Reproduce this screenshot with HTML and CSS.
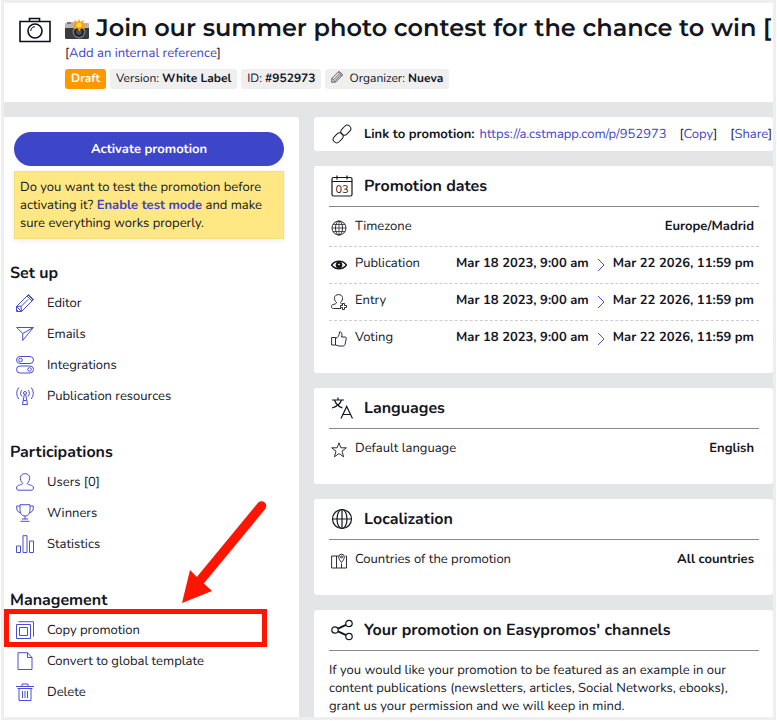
FILE: index.html
```html
<!DOCTYPE html>
<html lang="en">
<head>
    <meta charset="UTF-8">
    <meta name="viewport" content="width=device-width, initial-scale=1.0">
    <title>Promotion overview</title>
    <link rel="stylesheet" href="styles.css">
</head>
<body>
    <div class="page">
        <header class="header">
            <svg class="header-icon" viewBox="0 0 32 26" fill="none" stroke="#0c0f1a" stroke-width="1.6">
                <path d="M1 4.500h30v20H1zM10.500 4V1.500h10V4"/>
                <circle cx="16" cy="14" r="7"/>
                <path d="M11.800 14a4.200 4.200 0 0 1 4.200-4.200" stroke-width="1.1"/>
            </svg>
            <div class="header-text">
                <h1>
                    <svg class="emoji" viewBox="0 0 24 20">
                        <rect x="0" y="5" width="24" height="15" rx="1.500" fill="#3b3b3d"/>
                        <path d="M1 4h5V3h12v1h5a1 1 0 0 1 1 1v4H0V5a1 1 0 0 1 1-1z" fill="#b5b5b6"/>
                        <rect x="2" y="3" width="4" height="2" fill="#777"/>
                        <circle cx="14" cy="13" r="6.500" fill="#77787a"/>
                        <circle cx="14" cy="13" r="5" fill="#1f2126"/>
                        <circle cx="14" cy="13" r="3" fill="#4b5058"/>
                        <path d="M14 0l1.300 3L19 1l-1.200 3.500 3.700 1-3.500 1.700L20 10.500l-4-1.300-1.500 3.300-2-3.300-4 1.300 1.700-3.300L7 6l3.300-1.500L9 1l3.700 2z" fill="#ff9d0a"/>
                        <circle cx="14" cy="6" r="2.600" fill="#ffdc4a"/>
                    </svg>
                    Join our summer photo contest for the chance to win [E
                </h1>
                <p class="reference">[<a href="#">Add an internal reference</a>]</p>
                <div class="badges">
                    <span class="badge draft">Draft</span>
                    <span class="badge">Version: <b>White Label</b></span>
                    <span class="badge">ID: <b>#952973</b></span>
                    <span class="badge">
                        <svg class="badge-icon" viewBox="0 0 18 18" fill="none" stroke="#333" stroke-width="1.2" stroke-linejoin="round">
                            <path d="M1 17l.5-6L11 1.500 12.500 .8l4.700 4.700-.7 1.500L7 16.500zM1.500 11L7 16.500M11 1.500L16.500 7M4.500 12.500l8-8M6.500 14l8-8"/>
                        </svg>
                        Organizer: <b>Nueva</b>
                    </span>
                </div>
            </div>
        </header>

        <div class="content">
            <aside class="sidebar">
                <button class="activate" type="button">Activate promotion</button>
                <p class="notice">Do you want to test the promotion before activating it? <a href="#">Enable test mode</a> and make sure everything works properly.</p>

                <nav>
                    <h2>Set up</h2>
                    <ul>
                        <li><a href="#">
                            <svg viewBox="0 0 18 18"><path d="M.5 17.500v-5L11 2l1.500-1.500 5 5L16 7 5.500 17.500zM.5 12.500l5 5M11 2l5 5M12 1l5 5M5 12.500l7-7M.5 12.500l4.500-.5.5 5.500M.5 15.500l2 2"/></svg>
                            Editor</a></li>
                        <li><a href="#">
                            <svg viewBox="0 0 18 18"><path d="M.7 2.500h16.600L6.700 15.500V8.500zM6.700 8.500L17.300 2.500"/></svg>
                            Emails</a></li>
                        <li><a href="#">
                            <svg viewBox="0 0 18 18"><rect x=".5" y=".5" width="17" height="7" rx="3.500"/><circle cx="4.500" cy="4" r="1.800"/><rect x=".5" y="10" width="17" height="7" rx="3.500"/><circle cx="13.500" cy="13.500" r="1.800"/></svg>
                            Integrations</a></li>
                        <li><a href="#">
                            <svg viewBox="0 0 18 18"><circle cx="9" cy="6" r="1.500"/><path d="M8.300 7.500L6.500 17.500h5L9.700 7.500M7.300 13.500h3.400M6 9.500a4.500 4.500 0 0 1 0-6.500M12 9.500a4.500 4.500 0 0 0 0-6.500M2.800 12a9 9 0 0 1 0-11.500M15.200 12a9 9 0 0 0 0-11.500"/></svg>
                            Publication resources</a></li>
                    </ul>
                    <h2>Participations</h2>
                    <ul>
                        <li><a href="#">
                            <svg viewBox="0 0 18 18"><path d="M6.700 10.300C3 7 3.500.7 9 .7s6 6.300 2.300 9.600c0 2 6.200 1 6.200 4.700 0 1.500-.8 2.200-2.500 2.200H3C1.300 17.200.5 16.500.5 15c0-3.700 6.200-2.700 6.200-4.700z"/></svg>
                            Users [0]</a></li>
                        <li><a href="#">
                            <svg viewBox="0 0 18 18"><path d="M4 .7h10v5c0 4-2 6.300-5 6.300S4 9.700 4 5.700zM4 2H.7v2c0 3 1.800 4.500 4.300 4.800M14 2h3.300v2c0 3-1.800 4.500-4.300 4.800M9 12v3M6 15h6M4.500 17.300h9"/></svg>
                            Winners</a></li>
                        <li><a href="#">
                            <svg viewBox="0 0 18 18"><path d="M.5 11h4v6.500h-4zM7 .7h4v16.800H7zM13.500 6h4v11.500h-4z"/></svg>
                            Statistics</a></li>
                    </ul>
                    <h2>Management</h2>
                    <ul>
                        <li class="highlighted"><a href="#">
                            <svg viewBox="0 0 18 18"><path d="M.5 3.500h14v14H.5zM3.500 6.500h8v8h-8zM2.500 .7h15v15"/></svg>
                            Copy promotion</a>
                            <!-- pointer to the highlighted entry -->
                            <svg class="arrow" viewBox="0 0 86 104">
                                <path d="M80.500 6L17 83" stroke="#ff1500" stroke-width="9.500" stroke-linecap="round"/>
                                <path d="M1 103L9 70l10 10 12 11z" fill="#ff1500" stroke="none"/>
                            </svg>
                        </li>
                        <li><a href="#">
                            <svg viewBox="0 0 18 18"><path d="M2 .7h9.500L16 5.500v12H2zM11.500.7v4.800H16"/></svg>
                            Convert to global template</a></li>
                        <li><a href="#">
                            <svg viewBox="0 0 18 18"><path d="M0 3.500h18M1.500 5.500h15M6 3.500V1h6v2.500M3 5.500v12h12v-12M6.500 8v7M9 8v7M11.500 8v7"/></svg>
                            Delete</a></li>
                    </ul>
                </nav>
            </aside>

            <main class="main">
                <section class="card link-card">
                    <svg class="title-icon" viewBox="0 0 22 22">
                        <rect x="-5" y="-3.500" width="11" height="7" rx="3.500" transform="translate(14.500 7.500) rotate(-45)"/>
                        <rect x="-6" y="-3.500" width="11" height="7" rx="3.500" transform="translate(7.500 14.500) rotate(-45)"/>
                    </svg>
                    <b>Link to promotion:</b>
                    <a href="#">https://a.cstmapp.com/p/952973</a>
                    <span class="link-action">[<a href="#">Copy</a>]</span>
                    <span class="link-action">[<a href="#">Share</a>]</span>
                </section>

                <section class="card">
                    <h3>
                        <svg class="title-icon" viewBox="0 0 22 22"><rect x="1" y="2.500" width="20" height="18.500" rx="1.500"/><path d="M1 6.500h20M6 .5v4M16 .5v4"/><text x="11" y="17.500" text-anchor="middle">03</text></svg>
                        Promotion dates
                    </h3>
                    <dl>
                        <div class="row">
                            <dt><svg viewBox="0 0 16 16"><circle cx="8" cy="8" r="7"/><ellipse cx="8" cy="8" rx="3.500" ry="7"/><path d="M8 1v14M1 8h14M2 4.500h12M2 11.500h12" stroke-width=".7"/></svg>Timezone</dt>
                            <dd>Europe/Madrid</dd>
                        </div>
                        <div class="row">
                            <dt><svg viewBox="0 0 16 16"><path d="M.5 8C4 3 12 3 15.500 8 12 13 4 13 .5 8z" stroke-width="1.5"/><circle cx="8" cy="8" r="3" fill="#111"/><circle cx="8" cy="7.500" r=".6" stroke="#fff"/></svg>Publication</dt>
                            <dd>Mar 18 2023, 9:00 am <svg class="chevron" viewBox="0 0 8 14"><path d="M1 1l6 6-6 6"/></svg> Mar 22 2026, 11:59 pm</dd>
                        </div>
                        <div class="row">
                            <dt><svg viewBox="0 0 16 16"><path d="M10 14.500H2.500C-.5 14.500 0 11 2 10.500c2.500-.6 3.500-.8 3.500-2C2 5.500 3 .6 7.500.6s5.500 4.900 2 7.900c0 .8.5 1.200 1.500 1.500"/><path d="M11.500 9.500h2v2h2v2h-2v2h-2v-2h-2v-2h2z"/></svg>Entry</dt>
                            <dd>Mar 18 2023, 9:00 am <svg class="chevron" viewBox="0 0 8 14"><path d="M1 1l6 6-6 6"/></svg> Mar 22 2026, 11:59 pm</dd>
                        </div>
                        <div class="row">
                            <dt><svg viewBox="0 0 16 16"><path d="M.6 6.500h3.900v7.500H.6zM4.500 7.500C7 6.500 8.500 4.500 8.500 1c2.500-.5 3 2.500 2 5h3.500c1.500 0 1.500 1 1 3l-1 4.500c-.3 1-1 1.500-2 1.500H8c-1.500 0-2-1-3.500-1"/></svg>Voting</dt>
                            <dd>Mar 18 2023, 9:00 am <svg class="chevron" viewBox="0 0 8 14"><path d="M1 1l6 6-6 6"/></svg> Mar 22 2026, 11:59 pm</dd>
                        </div>
                    </dl>
                </section>

                <section class="card">
                    <h3>
                        <svg class="title-icon" viewBox="0 0 22 22"><path d="M1 3h12M7 .5V3M3.500 3c1 3.500 4 6.500 8 8M10.500 3c-1 3.500-4 6.500-9.500 8M10 21.500L15.700 9.500 21.500 21.500M12 17.500h7.500"/></svg>
                        Languages
                    </h3>
                    <dl>
                        <div class="row">
                            <dt><svg viewBox="0 0 16 16"><path d="M8 .8l1.900 5h5.400L11 9.200l1.600 5.600L8 11.500l-4.600 3.300L5 9.200.7 5.800h5.400z"/></svg>Default language</dt>
                            <dd>English</dd>
                        </div>
                    </dl>
                </section>

                <section class="card">
                    <h3>
                        <svg class="title-icon" viewBox="0 0 22 22"><circle cx="11" cy="11" r="9.500"/><ellipse cx="11" cy="11" rx="5" ry="9.500"/><path d="M11 1.500v19M1.500 11h19"/></svg>
                        Localization
                    </h3>
                    <dl>
                        <div class="row">
                            <dt><svg viewBox="0 0 16 16"><path d="M7.500 3H.6v12h14.900V3h-1M5.500 3v12M10.500 10.500V15M10.500 9.500C9 7.500 7.700 6 7.700 4a2.800 2.800 0 0 1 5.600 0c0 2-1.300 3.500-2.800 5.500z"/><circle cx="10.500" cy="4" r="1"/></svg>Countries of the promotion</dt>
                            <dd>All countries</dd>
                        </div>
                    </dl>
                </section>

                <section class="card">
                    <h3>
                        <svg class="title-icon" viewBox="0 0 22 22"><circle cx="4" cy="11" r="3.200"/><circle cx="18" cy="4.500" r="3.200"/><circle cx="18" cy="17.500" r="3.200"/><path d="M7 9.600l8-3.700M7 12.400l8 3.700" stroke-width="2"/></svg>
                        Your promotion on Easypromos' channels
                    </h3>
                    <p class="card-text">If you would like your promotion to be featured as an example in our content publications (newsletters, articles, Social Networks, ebooks), grant us your permission and we will keep in mind.</p>
                </section>
            </main>
        </div>
    </div>
</body>
</html>
```
FILE: styles.css
```css
*, *::after {
    box-sizing: border-box;
}
body {
    margin: 0;
    background-color: #fff;
    color: #14161f;
    font-family: "Nunito", "Open Sans", sans-serif;
    font-size: 13px;
    line-height: 18px;
    text-rendering: geometricPrecision;
}
h1, h2, h3, p, ul, dl, dd {
    margin: 0;
    padding: 0;
}
a {
    color: #4045c8;
    text-decoration: none;
}
svg {
    flex: none;
}
.page {
    display: flex;
    flex-direction: column;
    height: calc(100vh - 1px);
    margin: 0 1px;
    border: 3px solid #eee;
    background-color: #e4e5e7;
    overflow: hidden;
}

/* Header */
.header {
    flex: none;
    display: flex;
    gap: 14px;
    padding: 12px 0 13px 15px;
    background-color: #fff;
}
.header-icon {
    width: 32px;
    height: 26px;
    margin-top: 2px;
}
.header-text {
    min-width: 0;
}
h1 {
    display: flex;
    align-items: center;
    gap: 7px;
    font-family: "Montserrat", "Inter", sans-serif;
    font-size: 24px;
    font-weight: 600;
    line-height: 28px;
    white-space: nowrap;
}
.emoji {
    width: 24px;
    height: 20px;
}
.reference {
    line-height: 20px;
}
.badges {
    display: flex;
    gap: 4px;
    margin-top: 6px;
}
.badge {
    padding: 0 6px;
    border-radius: 3px;
    background-color: #efefef;
    font-size: 12px;
    line-height: 20px;
    white-space: nowrap;
}
.badge.draft {
    background-color: #ff9800;
    color: #fff;
    font-weight: bold;
}
.badge-icon {
    width: 12px;
    height: 12px;
    margin-right: 3px;
    vertical-align: -1px;
}

/* Columns */
.content {
    flex: 1;
    display: grid;
    grid-template-columns: 295px 1fr;
    gap: 15px;
    min-height: 0;
    padding-top: 15px;
}
.sidebar {
    padding: 15px 15px 0 6px;
    border-radius: 0 3px 0 0;
    background-color: #fff;
}
.activate {
    display: block;
    width: 270px;
    height: 34px;
    margin-left: 4px;
    border: 0;
    border-radius: 17px;
    background-color: #3d46c9;
    color: #fff;
    font: inherit;
    font-weight: bold;
    text-rendering: inherit;
}
.notice {
    width: 270px;
    margin: 5px 0 19px 4px;
    padding: 6px 5px;
    border: 1px solid #f5df7c;
    background-color: #ffe784;
    box-shadow: 0 2px 6px rgba(0,0,0,0.08);
}
.notice a {
    font-weight: bold;
}
.sidebar h2 {
    padding-top: 2px;
    font-size: 16px;
    font-weight: bold;
    line-height: 27px;
}
.sidebar ul {
    margin-bottom: 26px;
    list-style: none;
}
.sidebar li a {
    display: flex;
    align-items: center;
    gap: 13px;
    height: 31px;
    padding-left: 6px;
    color: inherit;
}
.sidebar li svg {
    width: 18px;
    height: 18px;
    fill: none;
    stroke: #4a4fd0;
    stroke-width: 1;
}
.highlighted {
    position: relative;
}
.highlighted::after {
    content: "";
    position: absolute;
    top: -5px;
    left: -6px;
    width: 263px;
    height: 38px;
    border: 5px solid #ff1500;
}
.sidebar .arrow {
    position: absolute;
    bottom: 41px;
    left: 171px;
    width: 86px;
    height: 104px;
}

/* Cards */
.main {
    display: flex;
    flex-direction: column;
    gap: 15px;
    min-width: 0;
}
.card {
    flex: none;
    padding: 0 14px 15px 15px;
    border-radius: 3px;
    background-color: #fff;
}
.card svg {
    fill: none;
    stroke: #14161f;
}
.title-icon {
    width: 22px;
    height: 22px;
    stroke-width: 1.2;
}
.title-icon text {
    fill: #14161f;
    stroke: none;
    font-size: 11px;
    font-weight: normal;
}
.link-card {
    display: flex;
    align-items: center;
    gap: 5px;
    height: 34px;
    padding: 0 0 0 17px;
    white-space: nowrap;
}
.link-card .title-icon {
    margin-right: 6px;
    stroke-width: 1;
}
.link-action {
    margin-left: 8px;
}
.card h3 {
    display: flex;
    align-items: center;
    gap: 11px;
    height: 41px;
    padding-left: 2px;
    border-bottom: 1px solid #888;
    font-size: 16px;
    font-weight: bold;
}
.card dl {
    padding-top: 3px;
}
.row {
    display: flex;
    justify-content: space-between;
    padding: 6px 5px 10px 2px;
    border-bottom: 1px dashed #ccc;
    line-height: 20px;
}
.row:last-child {
    border-color: transparent;
}
.row dt {
    display: flex;
    gap: 8px;
}
.row dt svg {
    width: 16px;
    height: 16px;
    margin-top: 4px;
    stroke-width: 0.9;
}
.row dd {
    display: flex;
    gap: 8px;
    font-weight: bold;
}
.row .chevron {
    width: 8px;
    height: 14px;
    margin-top: 5px;
    stroke: #4a4fd0;
}
.card-text {
    padding-top: 10px;
}
```
